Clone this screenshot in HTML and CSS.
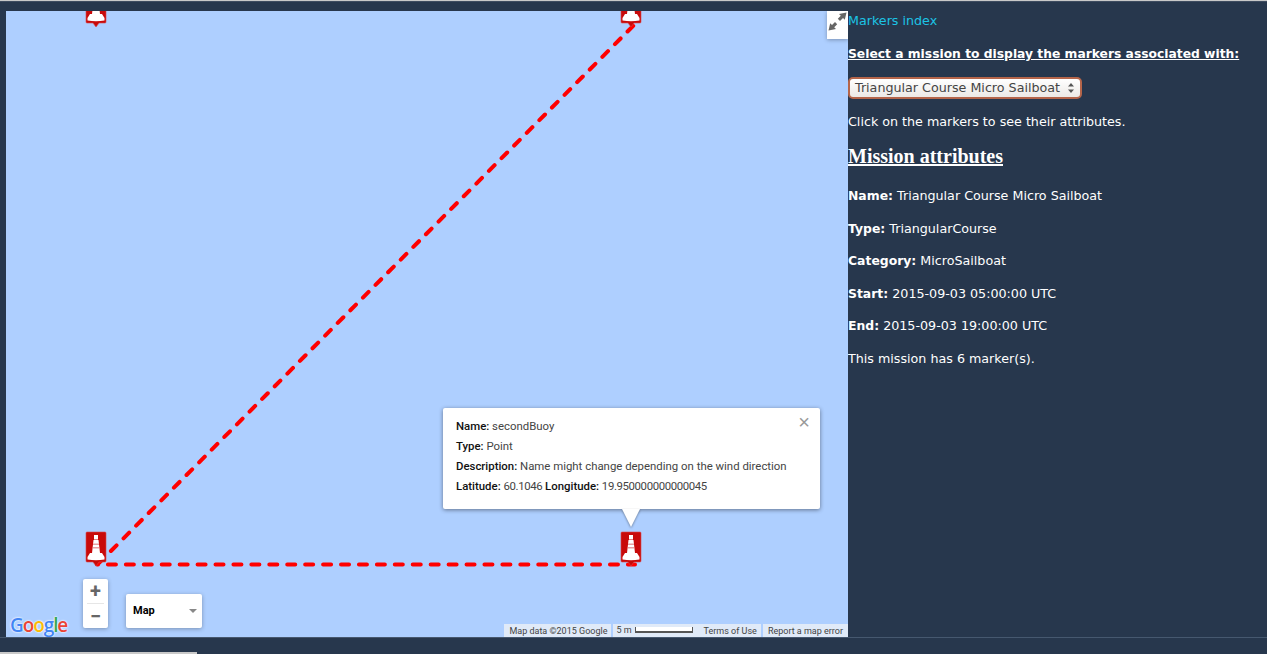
FILE: index.html
```html
<!DOCTYPE html>
<html>
<head>
  <title>Markers</title>
  <link rel="stylesheet" href="styles.css">
</head>
<body>
  <div class="topline"></div>
  <div class="page">
    <div class="map">
      <svg class="route" width="842" height="626" viewBox="0 0 842 626">
        <path d="M91 554 L631 11" class="dash diagonal"/>
        <path d="M91 553.500 L629 553.500" class="dash"/>
      </svg>

      <svg class="marker marker-a" width="22" height="35" viewBox="0 0 22 35"><use href="#buoy"/></svg>
      <svg class="marker marker-b" width="22" height="35" viewBox="0 0 22 35"><use href="#buoy"/></svg>
      <svg class="marker marker-c" width="22" height="35" viewBox="0 0 22 35"><use href="#buoy"/></svg>
      <svg class="marker marker-d" width="22" height="35" viewBox="0 0 22 35">
        <defs>
          <g id="buoy">
            <path d="M2 1h18a1 1 0 0 1 1 1v28a1 1 0 0 1-1 1h-6l-3 4-3-4H2a1 1 0 0 1-1-1V2a1 1 0 0 1 1-1z" fill="#c80a0a" stroke="#d8474a" stroke-width="0.600"/>
            <path d="M9 4h4v4.500h-4zM8.500 9h5l1.500 13H7z" fill="#fff"/>
            <path d="M5 22h12l2.500 4v2.500q-8.500 1.500-17 0V26z" fill="#fff"/>
            <path d="M8 12.500h6v1.500H8zM8 16h6v1.500H8z" fill="#e8a0a2"/>
          </g>
        </defs>
        <use href="#buoy"/>
      </svg>

      <button class="fullscreen" type="button">
        <svg width="21" height="21" viewBox="0 0 21 21">
          <path d="M19.500 1.500l-7.500 1.500 1.800 1.800-3 3 2.200 2.200 3-3 1.800 1.800z M1.500 19.500l7.500-1.500-1.800-1.800 3-3-2.200-2.200-3 3-1.800-1.800z" fill="#666"/>
        </svg>
      </button>

      <div class="infowindow">
        <button class="close" type="button">×</button>
        <p><b>Name:</b> secondBuoy</p>
        <p><b>Type:</b> Point</p>
        <p><b>Description:</b> Name might change depending on the wind direction</p>
        <p><b>Latitude:</b> <span class="num">60.1046</span> <b>Longitude:</b> <span class="num">19.950000000000045</span></p>
      </div>
      <div class="tail"></div>

      <div class="zoom">
        <span class="zoom-btn">+</span>
        <span class="zoom-sep"></span>
        <span class="zoom-btn">−</span>
      </div>
      <div class="maptype"><b>Map</b><i class="caret"></i></div>

      <div class="logo"><span class="blue">G</span><span class="red">o</span><span class="yellow">o</span><span class="blue">g</span><span class="green">l</span><span class="red">e</span></div>

      <div class="attrib">
        <span class="attrib-item first">Map data ©2015 Google</span>
        <span class="attrib-item scale">5 m <i class="scalebar"></i><span class="terms">Terms of Use</span></span>
        <span class="attrib-item">Report a map error</span>
      </div>
    </div>

    <div class="sidebar">
      <a class="index-link" href="#">Markers index</a>
      <p class="select-title">Select a mission to display the markers associated with:</p>
      <div class="select-box">Triangular Course Micro Sailboat
        <svg width="8" height="12" viewBox="0 0 8 12"><path d="M4 1l3 3.500H1zM4 11L1 7.500h6z" fill="#555"/></svg>
      </div>
      <p>Click on the markers to see their attributes.</p>
      <h2>Mission attributes</h2>
      <p><b>Name:</b> Triangular Course Micro Sailboat</p>
      <p><b>Type:</b> TriangularCourse</p>
      <p><b>Category:</b> MicroSailboat</p>
      <p><b>Start:</b> 2015-09-03 05:00:00 UTC</p>
      <p><b>End:</b> 2015-09-03 19:00:00 UTC</p>
      <p>This mission has 6 marker(s).</p>
    </div>
  </div>
  <div class="bottom"><div class="scrollbar"></div></div>
</body>
</html>
```

FILE: styles.css
```css
html, body {
  margin: 0;
  padding: 0;
  height: 100%;
  overflow: hidden;
}

body {
  width: 1267px;
  height: 654px;
  background-color: #27374d;
  font-family: "DejaVu Sans", sans-serif;
  font-size: 12.700px;
  color: #fff;
  display: flex;
  flex-direction: column;
}

.topline {
  height: 2px;
  background: linear-gradient(#c9c9c9 50%, #3e4c60 50%);
}

.page {
  display: flex;
  height: 626px;
  margin-top: 9px;
  padding-left: 6px;
}

.map {
  position: relative;
  width: 842px;
  height: 626px;
  flex: none;
  background-color: #aecfff;
  overflow: hidden;
  font-family: Roboto, Arial, sans-serif;
}

.route {
  position: absolute;
  left: 0;
  top: 0;
}

.dash {
  fill: none;
  stroke: #f00;
  stroke-width: 4;
  stroke-linecap: round;
  stroke-dasharray: 8 9.930;
  stroke-dashoffset: 7;
}

.diagonal {
  stroke-dasharray: 8 9.870;
  stroke-dashoffset: 16;
}

.marker {
  position: absolute;
}

.marker-a { left: 79px; top: -19px; }
.marker-b { left: 614px; top: -19px; }
.marker-c { left: 79px; top: 520px; }
.marker-d { left: 614px; top: 520px; }

.fullscreen {
  position: absolute;
  right: 0;
  top: 0;
  width: 21px;
  height: 28px;
  padding: 0;
  border: none;
  background-color: #fff;
  box-shadow: 0 1px 4px rgba(0, 0, 0, 0.3);
}

.fullscreen svg {
  display: block;
  position: absolute;
  left: 0;
  top: 0;
}

.infowindow {
  position: absolute;
  left: 437px;
  top: 397px;
  width: 377px;
  height: 101px;
  box-sizing: border-box;
  padding: 8px 13px;
  background-color: #fff;
  border-radius: 2px;
  box-shadow: 0 1px 4px rgba(0, 0, 0, 0.45);
  color: #444;
  font-size: 11.400px;
}

.infowindow p {
  margin: 0;
  height: 20px;
  line-height: 20px;
  white-space: nowrap;
}

.infowindow b {
  font-weight: 500;
  color: #111;
}

.num {
  letter-spacing: -0.38px;
}

.close {
  position: absolute;
  right: 10px;
  top: 4px;
  padding: 0;
  border: none;
  background: none;
  font-size: 20px;
  line-height: 20px;
  color: #999;
}

.tail {
  position: absolute;
  left: 616px;
  top: 498px;
  width: 0;
  height: 0;
  border-left: 9px solid transparent;
  border-right: 9px solid transparent;
  border-top: 18px solid #fff;
  filter: drop-shadow(0 1px 1px rgba(0, 0, 0, 0.4));
}

.zoom {
  position: absolute;
  left: 77px;
  top: 568px;
  width: 25px;
  height: 49px;
  background-color: #fff;
  border-radius: 2px;
  box-shadow: 0 1px 4px rgba(0, 0, 0, 0.3);
  display: flex;
  flex-direction: column;
  align-items: center;
}

.zoom-btn {
  height: 24px;
  line-height: 24px;
  font-size: 20px;
  font-weight: 700;
  color: #666;
}

.zoom-sep {
  width: 17px;
  height: 1px;
  background-color: #e6e6e6;
}

.maptype {
  position: absolute;
  left: 120px;
  top: 583px;
  width: 76px;
  height: 34px;
  box-sizing: border-box;
  padding-left: 7px;
  line-height: 33px;
  background-color: #fff;
  border-radius: 2px;
  box-shadow: 0 1px 4px rgba(0, 0, 0, 0.3);
  color: #000;
  font-size: 11px;
}

.caret {
  position: absolute;
  right: 5px;
  top: 15px;
  border-left: 4px solid transparent;
  border-right: 4px solid transparent;
  border-top: 4px solid #888;
}

.logo {
  position: absolute;
  left: 4px;
  top: 602px;
  font-family: "Open Sans", sans-serif;
  font-size: 19px;
  font-weight: 600;
  line-height: 24px;
  letter-spacing: -1.1px;
  text-shadow: 0 0 2px #fff, 0 0 2px #fff;
}

.blue { color: #4285f4; }
.red { color: #ea4335; }
.yellow { color: #fbbc05; }
.green { color: #34a853; }

.attrib {
  position: absolute;
  right: 0;
  bottom: 0;
  height: 13px;
  display: flex;
  gap: 2px;
  font-size: 9px;
  line-height: 14px;
  color: #444;
  white-space: nowrap;
}

.attrib-item {
  padding: 0 5px;
  background-color: rgba(245, 245, 245, 0.7);
}

.first {
  width: 97px;
}

.scale {
  display: flex;
  align-items: center;
  padding: 0 4px 0 3px;
}

.terms {
  margin-left: 11px;
  padding-top: 2px;
}

.scalebar {
  display: block;
  width: 56px;
  height: 4px;
  margin-left: 3px;
  border: 1px solid #555;
  border-top: none;
  border-bottom-width: 2px;
  background-color: #fff;
}

.sidebar {
  width: 419px;
  flex: none;
  line-height: 15px;
  padding-top: 2px;
}

.sidebar p {
  margin: 0 0 17.600px;
  white-space: nowrap;
}

.sidebar b {
  font-size: 12.400px;
  line-height: 0;
}

.index-link {
  display: block;
  margin-bottom: 19px;
  color: #1cc4e6;
  text-decoration: none;
}

.select-title {
  font-size: 12.300px;
  font-weight: 700;
  text-decoration: underline;
}

.select-box {
  width: 234px;
  height: 22px;
  box-sizing: border-box;
  margin-top: -2px;
  margin-bottom: 15px;
  padding-left: 5px;
  border: 2px solid #b5654a;
  border-radius: 5px;
  background: linear-gradient(#fff, #ece9e6);
  color: #444;
  line-height: 18px;
  display: flex;
  align-items: center;
  justify-content: space-between;
  padding-right: 5px;
}

.sidebar h2 {
  margin: -2px 0 21px;
  font-family: "Liberation Serif", serif;
  font-size: 20px;
  line-height: 22px;
  text-decoration: underline;
}

.bottom {
  height: 17px;
  border-top: 1px solid #46586f;
  position: relative;
}

.scrollbar {
  position: absolute;
  left: 0;
  bottom: 0;
  width: 197px;
  height: 2px;
  background-color: #c9c9c9;
}
```
